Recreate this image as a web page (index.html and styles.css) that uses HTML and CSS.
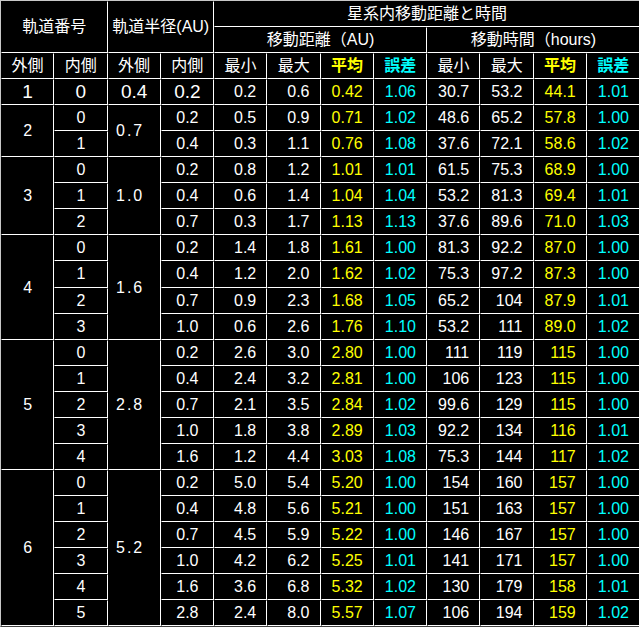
FILE: index.html
```html
<!DOCTYPE html>
<html lang="ja">
<head>
<meta charset="utf-8">
<title>軌道と移動時間</title>
<link rel="stylesheet" href="styles.css">
</head>
<body>
<table class="grid">
<thead>
<tr>
<th colspan="2" rowspan="2" class="hd">軌道番号</th>
<th colspan="2" rowspan="2" class="hd">軌道半径(AU)</th>
<th colspan="8" class="hd">星系内移動距離と時間</th>
</tr>
<tr>
<th colspan="4" class="hd">移動距離（AU)</th>
<th colspan="4" class="hd">移動時間（hours)</th>
</tr>
<tr>
<th>外側</th><th>内側</th><th>外側</th><th>内側</th>
<th>最小</th><th>最大</th><th class="yl b">平均</th><th class="cy b">誤差</th>
<th>最小</th><th>最大</th><th class="yl b">平均</th><th class="cy b">誤差</th>
</tr>
</thead>
<tbody>
<tr><td class="big">1</td><td class="big">0</td><td class="big">0.4</td><td class="big">0.2</td><td class="n">0.2</td><td class="n">0.6</td><td class="n yl">0.42</td><td class="n cy">1.06</td><td class="n">30.7</td><td class="n">53.2</td><td class="n yl">44.1</td><td class="n cy">1.01</td></tr>

<tr><td rowspan="2">2</td><td>0</td><td rowspan="2" class="rad">0.7</td><td>0.2</td><td class="n">0.5</td><td class="n">0.9</td><td class="n yl">0.71</td><td class="n cy">1.02</td><td class="n">48.6</td><td class="n">65.2</td><td class="n yl">57.8</td><td class="n cy">1.00</td></tr>
<tr><td>1</td><td>0.4</td><td class="n">0.3</td><td class="n">1.1</td><td class="n yl">0.76</td><td class="n cy">1.08</td><td class="n">37.6</td><td class="n">72.1</td><td class="n yl">58.6</td><td class="n cy">1.02</td></tr>

<tr><td rowspan="3">3</td><td>0</td><td rowspan="3" class="rad">1.0</td><td>0.2</td><td class="n">0.8</td><td class="n">1.2</td><td class="n yl">1.01</td><td class="n cy">1.01</td><td class="n">61.5</td><td class="n">75.3</td><td class="n yl">68.9</td><td class="n cy">1.00</td></tr>
<tr><td>1</td><td>0.4</td><td class="n">0.6</td><td class="n">1.4</td><td class="n yl">1.04</td><td class="n cy">1.04</td><td class="n">53.2</td><td class="n">81.3</td><td class="n yl">69.4</td><td class="n cy">1.01</td></tr>
<tr><td>2</td><td>0.7</td><td class="n">0.3</td><td class="n">1.7</td><td class="n yl">1.13</td><td class="n cy">1.13</td><td class="n">37.6</td><td class="n">89.6</td><td class="n yl">71.0</td><td class="n cy">1.03</td></tr>

<tr><td rowspan="4">4</td><td>0</td><td rowspan="4" class="rad">1.6</td><td>0.2</td><td class="n">1.4</td><td class="n">1.8</td><td class="n yl">1.61</td><td class="n cy">1.00</td><td class="n">81.3</td><td class="n">92.2</td><td class="n yl">87.0</td><td class="n cy">1.00</td></tr>
<tr><td>1</td><td>0.4</td><td class="n">1.2</td><td class="n">2.0</td><td class="n yl">1.62</td><td class="n cy">1.02</td><td class="n">75.3</td><td class="n">97.2</td><td class="n yl">87.3</td><td class="n cy">1.00</td></tr>
<tr><td>2</td><td>0.7</td><td class="n">0.9</td><td class="n">2.3</td><td class="n yl">1.68</td><td class="n cy">1.05</td><td class="n">65.2</td><td class="n">104</td><td class="n yl">87.9</td><td class="n cy">1.01</td></tr>
<tr><td>3</td><td>1.0</td><td class="n">0.6</td><td class="n">2.6</td><td class="n yl">1.76</td><td class="n cy">1.10</td><td class="n">53.2</td><td class="n">111</td><td class="n yl">89.0</td><td class="n cy">1.02</td></tr>

<tr><td rowspan="5">5</td><td>0</td><td rowspan="5" class="rad">2.8</td><td>0.2</td><td class="n">2.6</td><td class="n">3.0</td><td class="n yl">2.80</td><td class="n cy">1.00</td><td class="n">111</td><td class="n">119</td><td class="n yl">115</td><td class="n cy">1.00</td></tr>
<tr><td>1</td><td>0.4</td><td class="n">2.4</td><td class="n">3.2</td><td class="n yl">2.81</td><td class="n cy">1.00</td><td class="n">106</td><td class="n">123</td><td class="n yl">115</td><td class="n cy">1.00</td></tr>
<tr><td>2</td><td>0.7</td><td class="n">2.1</td><td class="n">3.5</td><td class="n yl">2.84</td><td class="n cy">1.02</td><td class="n">99.6</td><td class="n">129</td><td class="n yl">115</td><td class="n cy">1.00</td></tr>
<tr><td>3</td><td>1.0</td><td class="n">1.8</td><td class="n">3.8</td><td class="n yl">2.89</td><td class="n cy">1.03</td><td class="n">92.2</td><td class="n">134</td><td class="n yl">116</td><td class="n cy">1.01</td></tr>
<tr><td>4</td><td>1.6</td><td class="n">1.2</td><td class="n">4.4</td><td class="n yl">3.03</td><td class="n cy">1.08</td><td class="n">75.3</td><td class="n">144</td><td class="n yl">117</td><td class="n cy">1.02</td></tr>

<tr><td rowspan="6">6</td><td>0</td><td rowspan="6" class="rad">5.2</td><td>0.2</td><td class="n">5.0</td><td class="n">5.4</td><td class="n yl">5.20</td><td class="n cy">1.00</td><td class="n">154</td><td class="n">160</td><td class="n yl">157</td><td class="n cy">1.00</td></tr>
<tr><td>1</td><td>0.4</td><td class="n">4.8</td><td class="n">5.6</td><td class="n yl">5.21</td><td class="n cy">1.00</td><td class="n">151</td><td class="n">163</td><td class="n yl">157</td><td class="n cy">1.00</td></tr>
<tr><td>2</td><td>0.7</td><td class="n">4.5</td><td class="n">5.9</td><td class="n yl">5.22</td><td class="n cy">1.00</td><td class="n">146</td><td class="n">167</td><td class="n yl">157</td><td class="n cy">1.00</td></tr>
<tr><td>3</td><td>1.0</td><td class="n">4.2</td><td class="n">6.2</td><td class="n yl">5.25</td><td class="n cy">1.01</td><td class="n">141</td><td class="n">171</td><td class="n yl">157</td><td class="n cy">1.00</td></tr>
<tr><td>4</td><td>1.6</td><td class="n">3.6</td><td class="n">6.8</td><td class="n yl">5.32</td><td class="n cy">1.02</td><td class="n">130</td><td class="n">179</td><td class="n yl">158</td><td class="n cy">1.01</td></tr>
<tr><td>5</td><td>2.8</td><td class="n">2.4</td><td class="n">8.0</td><td class="n yl">5.57</td><td class="n cy">1.07</td><td class="n">106</td><td class="n">194</td><td class="n yl">159</td><td class="n cy">1.02</td></tr>
</tbody>
</table>
</body>
</html>
```

FILE: styles.css
```css
html, body {
  margin: 0;
  padding: 0;
  background: #000;
}

body {
  width: 639px;
  height: 627px;
  overflow: hidden;
}

.grid {
  border-collapse: separate;
  border-spacing: 0;
  table-layout: fixed;
  width: 641px;
  border: 1px solid;
  border-color: #c8c8c8 #404040 #404040 #c8c8c8;
  color: #fff;
  font-family: "Liberation Sans", "Noto Sans CJK JP", sans-serif;
  font-size: 16px;
}

.grid th,
.grid td {
  border: 1px solid;
  border-color: #000 #fff #fff #000;
  padding: 0;
  height: 24.05px;
  line-height: 24px;
  text-align: center;
  font-weight: normal;
  white-space: nowrap;
  overflow: hidden;
}

.grid .hd {
  font-size: 16px;
}

.grid .n {
  text-align: right;
  padding-right: 10px;
}

.grid .big {
  font-size: 19px;
}

.grid .rad {
  letter-spacing: 2px;
  padding-right: 8px;
}

.grid .yl {
  color: #ffff00;
}

.grid .cy {
  color: #00ffff;
}

.grid .b {
  font-weight: bold;
}
```
